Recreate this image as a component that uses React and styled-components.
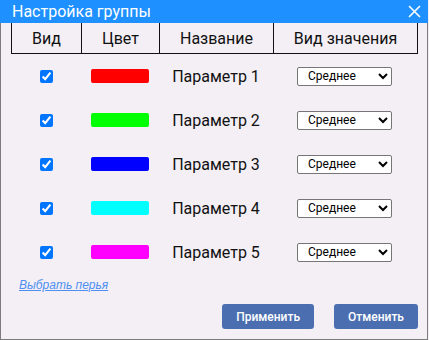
import React from "react";
import styled, { createGlobalStyle } from "styled-components";

const Global = createGlobalStyle`
  html, body { margin: 0; padding: 0; background: #f3eff5; }
  body { font-family: Roboto, "Noto Sans", sans-serif; }
  * { box-sizing: border-box; }
`;

const Window = styled.div`
  width: 428px;
  height: 340px;
  display: flex;
  flex-direction: column;
  background: #f3eff5;
`;

const TitleBar = styled.div`
  height: 23px;
  flex: none;
  background: #1e90ff;
  color: #fff;
  display: flex;
  align-items: center;
  justify-content: space-between;
  padding: 0 7px 0 12px;
  font-size: 16px;
  line-height: 23px;
`;

const CloseButton = styled.button`
  border: 0;
  background: none;
  padding: 0;
  width: 14px;
  height: 14px;
  display: flex;
  align-items: center;
  justify-content: center;
  cursor: pointer;
`;

const Body = styled.div`
  flex: 1;
  border: 1px solid #7c7c7c;
  border-top: none;
  padding: 0 0 0 10px;
  display: flex;
  flex-direction: column;
`;

const widths = [70, 78, 114, 145];

const HeaderRow = styled.div`
  display: flex;
  width: 407px;
  height: 31px;
  border-bottom: 1px solid #111;
`;

const HeaderCell = styled.div`
  flex: none;
  width: ${(p) => p.$w}px;
  border-left: 1px solid #111;
  border-right: ${(p) => (p.$last ? "1px solid #111" : "none")};
  display: flex;
  align-items: center;
  justify-content: center;
  font-size: 16px;
  color: #111;
  padding-top: 1px;
  white-space: nowrap;
`;

const Row = styled.div`
  display: flex;
  width: 407px;
  height: 44px;
  align-items: center;
`;

const Cell = styled.div`
  flex: none;
  width: ${(p) => p.$w}px;
  display: flex;
  align-items: center;
  justify-content: center;
`;

const Check = styled.input`
  width: 13px;
  height: 13px;
  margin: 0 0 0 1px;
`;

const Swatch = styled.div`
  width: 58px;
  height: 14px;
  border-radius: 2px;
  background: ${(p) => p.$color};
`;

const Name = styled.div`
  font-size: 16px;
  color: #111;
  white-space: nowrap;
`;

const Select = styled.select`
  width: 95px;
  height: 19px;
  font-family: Roboto, sans-serif;
  font-size: 12px;
  color: #000;
  background: #fff;
  border: 1px solid #767676;
  border-radius: 2px;
  padding: 0 0 0 6px;
  margin-left: -2px;
`;

const LinkRow = styled.div`
  padding: 0 0 0 8px;
  height: 30px;
`;

const Link = styled.a`
  font-family: "Liberation Sans", Arial, sans-serif;
  font-style: italic;
  font-size: 12px;
  color: #4f8ff0;
  text-decoration: underline;
  cursor: pointer;
`;

const Footer = styled.div`
  display: flex;
  justify-content: flex-end;
  gap: 20px;
  padding: 0 9px 0 0;
`;

const Button = styled.button`
  height: 25px;
  padding: 0 14px;
  border: 0;
  border-radius: 3px;
  background: #4b6eb1;
  color: #fff;
  font-family: Roboto, sans-serif;
  font-size: 12px;
  font-weight: 500;
  cursor: pointer;
`;

const params = [
  { name: "Параметр 1", color: "#ff0000" },
  { name: "Параметр 2", color: "#00ff00" },
  { name: "Параметр 3", color: "#0000ff" },
  { name: "Параметр 4", color: "#00ffff" },
  { name: "Параметр 5", color: "#ff00ff" },
];

const headers = ["Вид", "Цвет", "Название", "Вид значения"];

export default function App() {
  return (
    <>
      <Global />
      <Window>
        <TitleBar>
          <span>Настройка группы</span>
          <CloseButton aria-label="Закрыть">
            <svg width="13" height="13" viewBox="0 0 13 13">
              <path d="M1 1 L12 12 M12 1 L1 12" stroke="#fff" strokeWidth="1.6" />
            </svg>
          </CloseButton>
        </TitleBar>
        <Body>
          <HeaderRow>
            {headers.map((h, i) => (
              <HeaderCell key={h} $w={widths[i]} $last={i === 3}>
                {h}
              </HeaderCell>
            ))}
          </HeaderRow>
          {params.map((p) => (
            <Row key={p.name}>
              <Cell $w={widths[0]}>
                <Check type="checkbox" defaultChecked />
              </Cell>
              <Cell $w={widths[1]}>
                <Swatch $color={p.color} />
              </Cell>
              <Cell $w={widths[2]}>
                <Name>{p.name}</Name>
              </Cell>
              <Cell $w={widths[3]}>
                <Select defaultValue="avg">
                  <option value="avg">Среднее</option>
                  <option value="min">Минимум</option>
                  <option value="max">Максимум</option>
                </Select>
              </Cell>
            </Row>
          ))}
          <LinkRow>
            <Link>Выбрать перья</Link>
          </LinkRow>
          <Footer>
            <Button>Применить</Button>
            <Button>Отменить</Button>
          </Footer>
        </Body>
      </Window>
    </>
  );
}
